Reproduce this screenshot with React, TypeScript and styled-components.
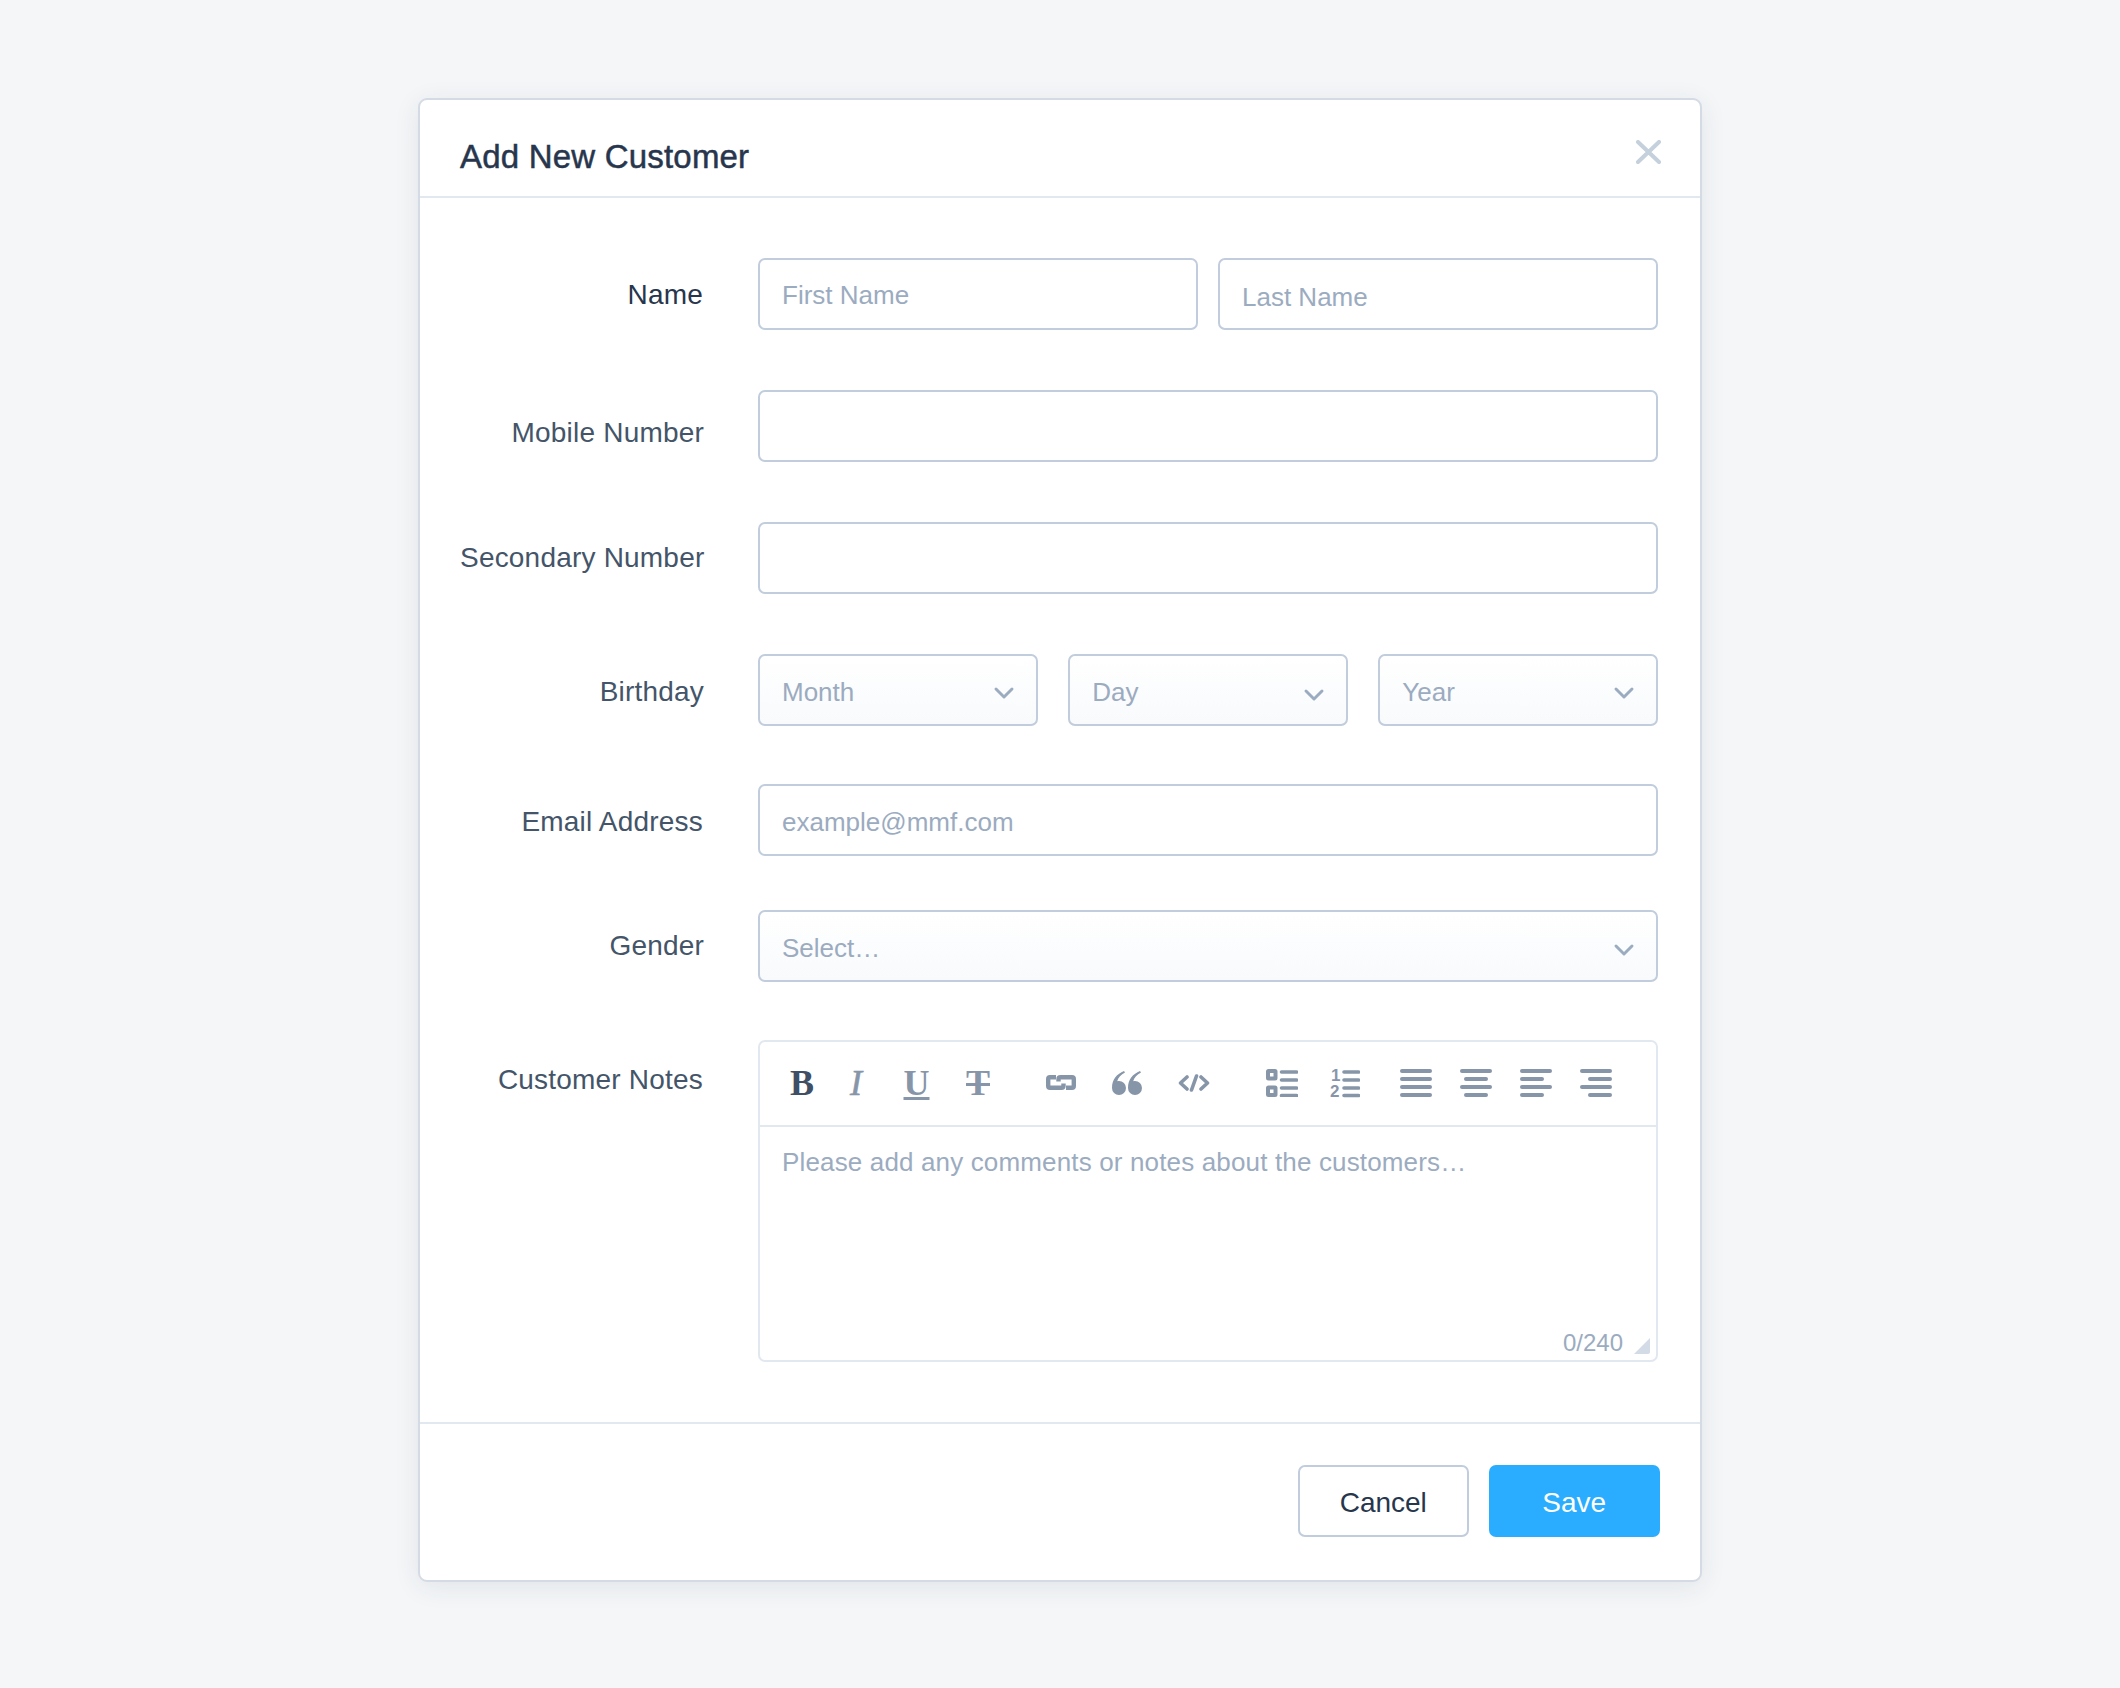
import React from "react"
import styled, { createGlobalStyle } from "styled-components"
import { ChevronDown } from "lucide-react"

const Global = createGlobalStyle`
  html, body {
    margin: 0;
    padding: 0;
    background: #f4f6f8;
  }
  * {
    box-sizing: border-box;
  }
`

const Page = styled.div`
  display: flex;
  justify-content: center;
  height: 1688px;
  padding: 98px 418px 0 418px;
  font-family: "Liberation Sans", Arial, sans-serif;
`

const Card = styled.div`
  width: 1284px;
  height: 1484px;
  background: #fff;
  border: 2px solid #d5dbe4;
  border-radius: 9px;
  box-shadow: 0 5px 26px rgba(40, 50, 70, 0.09);
`

const Header = styled.div`
  display: flex;
  justify-content: space-between;
  align-items: flex-start;
  height: 98px;
  padding: 38px 39px 0 40px;
  border-bottom: 2px solid #e2e8f0;
`

const Title = styled.h1`
  margin: 0;
  font-size: 33px;
  line-height: 38px;
  font-weight: 400;
  letter-spacing: 0.2px;
  color: #27364d;
  -webkit-text-stroke: 0.5px #27364d;
`

const CloseIcon = styled.svg`
  display: block;
  width: 25px;
  height: 24px;
  margin-top: 2px;
  stroke: #c5d0dd;
  stroke-width: 4;
  stroke-linecap: round;
`

const Body = styled.div`
  padding: 60px 42px 60px 40px;
  height: 1226px;
  border-bottom: 2px solid #e2e8f0;
`

const Row = styled.div<{ $mb: number }>`
  display: flex;
  margin-bottom: ${(p) => p.$mb}px;
`

const Label = styled.label<{ $dy?: number; $dark?: boolean; $dx?: number }>`
  flex: 0 0 244px;
  margin-right: 54px;
  padding-right: ${(p) => p.$dx ?? 0}px;
  padding-top: ${(p) => p.$dy ?? 20}px;
  text-align: right;
  white-space: nowrap;
  font-size: 28px;
  line-height: 32px;
  letter-spacing: 0.2px;
  color: ${(p) => (p.$dark ? "#27364d" : "#445569")};
`

const Fields = styled.div<{ $gap: number }>`
  display: flex;
  flex: 0 0 900px;
  gap: ${(p) => p.$gap}px;
`

const Input = styled.input<{ $pt?: number }>`
  flex: 1;
  min-width: 0;
  height: 72px;
  padding: ${(p) => p.$pt ?? 0}px 22px 0;
  border: 2px solid #c1cddc;
  border-radius: 7px;
  background: #fff;
  font-family: inherit;
  font-size: 26px;
  color: #27364d;
  outline: none;
  &::placeholder {
    color: #9babc0;
    opacity: 1;
  }
`

const Select = styled.div<{ $pt: number }>`
  display: flex;
  flex: 1;
  align-items: center;
  justify-content: space-between;
  height: 72px;
  padding: ${(p) => p.$pt}px 22px 0;
  border: 2px solid #c1cddc;
  border-radius: 7px;
  background: linear-gradient(#ffffff, #f8fafc);
  font-size: 26px;
  color: #9babc0;
`

const Chevron = styled(ChevronDown)<{ $my: number }>`
  width: 32px;
  height: 32px;
  margin: ${(p) => p.$my}px -6px 0 0;
  color: #9babc0;
  stroke-width: 2.200;
  flex-shrink: 0;
`

const Editor = styled.div`
  display: flex;
  flex-direction: column;
  flex: 0 0 900px;
  height: 322px;
  border: 2px solid #e2e8f0;
  border-radius: 7px;
`

const Toolbar = styled.div`
  display: flex;
  align-items: center;
  height: 85px;
  padding-bottom: 2px;
  flex-shrink: 0;
  border-bottom: 2px solid #e2e8f0;
`

const Slot = styled.span<{ $w: number; $ml: number }>`
  display: flex;
  align-items: center;
  justify-content: center;
  flex: 0 0 ${(p) => p.$w}px;
  min-width: 0;
  margin-left: ${(p) => p.$ml}px;
  height: 36px;
  color: #8795a9;
`

const Glyph = styled.span<{ $dark?: boolean; $italic?: boolean; $line?: string }>`
  font-family: "Liberation Serif", "Times New Roman", serif;
  font-size: 36px;
  line-height: 36px;
  font-weight: ${(p) => (p.$italic ? 400 : 700)};
  font-style: ${(p) => (p.$italic ? "italic" : "normal")};
  color: ${(p) => (p.$dark ? "#3f4f65" : "#8795a9")};
  -webkit-text-stroke: ${(p) => (p.$italic ? "0.6px #8795a9" : "0")};
  text-decoration: ${(p) => p.$line ?? "none"};
  text-decoration-thickness: 3px;
  text-underline-offset: 2px;
`

const Icon = styled.svg`
  display: block;
  flex-shrink: 0;
  fill: none;
  stroke: currentColor;
  stroke-linecap: round;
`

const EditorBody = styled.div`
  position: relative;
  flex: 1;
`

const Notes = styled.textarea`
  display: block;
  width: 100%;
  height: 100%;
  padding: 19px 22px 0;
  border: none;
  background: transparent;
  resize: none;
  outline: none;
  font-family: inherit;
  font-size: 26px;
  line-height: 32px;
  letter-spacing: 0.15px;
  &::placeholder {
    color: #9babc0;
    opacity: 1;
  }
`

const Counter = styled.span`
  position: absolute;
  right: 33px;
  bottom: 3px;
  font-size: 24px;
  line-height: 28px;
  color: #9babc0;
`

const Grip = styled.svg`
  position: absolute;
  right: 6px;
  bottom: 6px;
  width: 16px;
  height: 16px;
  fill: #d3dbe6;
`

const Footer = styled.div`
  display: flex;
  justify-content: flex-end;
  gap: 19.5px;
  padding: 41px 40px 0 0;
`

const Button = styled.button<{ $primary?: boolean }>`
  width: 171.5px;
  height: 72px;
  padding: 4px 0 0;
  border: ${(p) => (p.$primary ? "none" : "2px solid #c1cddc")};
  border-radius: 7px;
  background: ${(p) => (p.$primary ? "#2aacff" : "#fff")};
  color: ${(p) => (p.$primary ? "#fff" : "#27364d")};
  font-family: inherit;
  font-size: 28px;
`

const LinkIcon = () => (
  <Icon width="30" height="15" viewBox="0 0 30 15" strokeWidth="4.400">
    <path d="M10 2.200H4Q2.200 2.200 2.200 4V11Q2.200 12.800 4 12.800H15.500Q17.500 12.800 17.500 10.800V8.500" strokeLinecap="butt" />
    <path d="M20 12.800H26Q27.800 12.800 27.800 11V4Q27.800 2.200 26 2.200H14.500Q12.500 2.200 12.500 4.200V6.500" strokeLinecap="butt" />
  </Icon>
)

const QuoteIcon = () => (
  <Icon width="30" height="24" viewBox="0 0 30 24" style={{ stroke: "none", fill: "currentColor" }}>
    <path d="M12 0C5 3 0 8 0 17a7 7 0 1 0 7-7c-.7 0-1.300.1-1.800.3C6.300 6.500 9 3.500 13 1.500Z" />
    <path d="M28 0C21 3 16 8 16 17a7 7 0 1 0 7-7c-.7 0-1.300.1-1.800.3C22.300 6.500 25 3.500 29 1.500Z" />
  </Icon>
)

const CodeIcon = () => (
  <Icon width="32" height="18" viewBox="0 0 32 18" strokeWidth="3.600" strokeLinejoin="round">
    <path d="M9 3L2.500 9L9 15" />
    <path d="M23 3L29.500 9L23 15" />
    <path d="M18.500 2L13.500 16" />
  </Icon>
)

const ListIcon = () => (
  <Icon width="32" height="28" viewBox="0 0 32 28" strokeWidth="3.600">
    <rect x="2" y="2" width="7.500" height="7.500" rx="0.500" strokeWidth="4" />
    <rect x="2" y="18.500" width="7.500" height="7.500" rx="0.500" strokeWidth="4" />
    <path d="M15.500 3H30.500M15.500 11H30.500M15.500 19H30.500M15.500 26.500H30.500" />
  </Icon>
)

const OrderedIcon = () => (
  <Icon width="30" height="36" viewBox="0 -4 30 36" strokeWidth="3.600">
    <text x="1" y="12" fontFamily="Liberation Sans" fontWeight="700" fontSize="17" fill="currentColor" stroke="none">1</text>
    <text x="0" y="28" fontFamily="Liberation Sans" fontWeight="700" fontSize="17" fill="currentColor" stroke="none">2</text>
    <path d="M14 3H28.500M14 11H28.500M14 19H28.500M14 26.500H28.500" />
  </Icon>
)

const lines: Record<string, [number, number][]> = {
  justify: [[2, 30], [2, 30], [2, 30], [2, 30]],
  center: [[2, 30], [6, 26], [2, 30], [6, 26]],
  left: [[2, 30], [2, 22], [2, 30], [2, 22]],
  right: [[2, 30], [10, 30], [2, 30], [10, 30]],
}

const AlignIcon = ({ kind }: { kind: string }) => (
  <Icon width="32" height="28" viewBox="0 0 32 28" strokeWidth="4">
    {lines[kind].map(([a, b], i) => (
      <path key={i} d={`M${a} ${2 + i * 8}H${b}`} />
    ))}
  </Icon>
)

export default function App() {
  return (
    <Page>
      <Global />
      <Card>
        <Header>
          <Title>Add New Customer</Title>
          <CloseIcon viewBox="0 0 25 24">
            <path d="M2 2L23 22M23 2L2 22" />
          </CloseIcon>
        </Header>
        <Body>
          <Row $mb={60}>
            <Label $dark $dx={1} $dy={21}>Name</Label>
            <Fields $gap={20}>
              <Input placeholder="First Name" $pt={2} />
              <Input placeholder="Last Name" $pt={6} />
            </Fields>
          </Row>
          <Row $mb={60}>
            <Label $dy={27}>Mobile Number</Label>
            <Fields $gap={20}>
              <Input />
            </Fields>
          </Row>
          <Row $mb={60}>
            <Label $dy={20}>Secondary Number</Label>
            <Fields $gap={20}>
              <Input />
            </Fields>
          </Row>
          <Row $mb={58}>
            <Label $dy={22}>Birthday</Label>
            <Fields $gap={30.5}>
              <Select $pt={4}>
                Month
                <Chevron $my={2} />
              </Select>
              <Select $pt={4}>
                Day
                <Chevron $my={5} />
              </Select>
              <Select $pt={4}>
                Year
                <Chevron $my={2} />
              </Select>
            </Fields>
          </Row>
          <Row $mb={54}>
            <Label $dx={1} $dy={22}>Email Address</Label>
            <Fields $gap={20}>
              <Input placeholder="example@mmf.com" $pt={4} />
            </Fields>
          </Row>
          <Row $mb={58}>
            <Label $dy={20}>Gender</Label>
            <Fields $gap={20}>
              <Select $pt={4}>
                Select…
                <Chevron $my={4} />
              </Select>
            </Fields>
          </Row>
          <Row $mb={0}>
            <Label $dx={1} $dy={24}>Customer Notes</Label>
            <Editor>
              <Toolbar>
                <Slot $w={20} $ml={32}>
                  <Glyph $dark>B</Glyph>
                </Slot>
                <Slot $w={16} $ml={36}>
                  <Glyph $italic>I</Glyph>
                </Slot>
                <Slot $w={21} $ml={42}>
                  <Glyph $line="underline">U</Glyph>
                </Slot>
                <Slot $w={20} $ml={41}>
                  <Glyph $line="line-through">T</Glyph>
                </Slot>
                <Slot $w={30} $ml={58}>
                  <LinkIcon />
                </Slot>
                <Slot $w={30} $ml={36}>
                  <QuoteIcon />
                </Slot>
                <Slot $w={32} $ml={36}>
                  <CodeIcon />
                </Slot>
                <Slot $w={32} $ml={56}>
                  <ListIcon />
                </Slot>
                <Slot $w={30} $ml={32}>
                  <OrderedIcon />
                </Slot>
                <Slot $w={32} $ml={40}>
                  <AlignIcon kind="justify" />
                </Slot>
                <Slot $w={32} $ml={28}>
                  <AlignIcon kind="center" />
                </Slot>
                <Slot $w={32} $ml={28}>
                  <AlignIcon kind="left" />
                </Slot>
                <Slot $w={32} $ml={28}>
                  <AlignIcon kind="right" />
                </Slot>
              </Toolbar>
              <EditorBody>
                <Notes placeholder="Please add any comments or notes about the customers…" />
                <Counter>0/240</Counter>
                <Grip viewBox="0 0 16 16">
                  <path d="M16 0V14Q16 16 14 16H0Z" />
                </Grip>
              </EditorBody>
            </Editor>
          </Row>
        </Body>
        <Footer>
          <Button>Cancel</Button>
          <Button $primary>Save</Button>
        </Footer>
      </Card>
    </Page>
  )
}
